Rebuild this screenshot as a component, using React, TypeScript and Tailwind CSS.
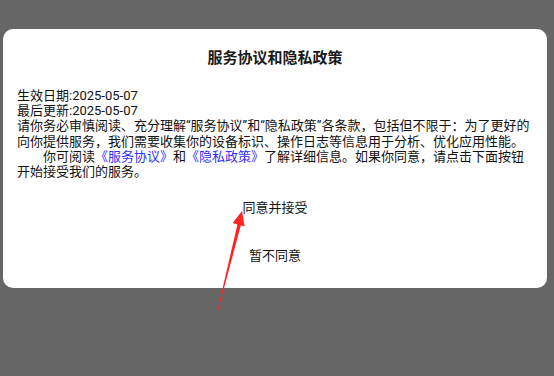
import React from 'react';

const font = { fontFamily: "Roboto, 'Noto Sans CJK SC', sans-serif" };

const Arrow: React.FC = () => (
  <svg
    className="absolute left-0 top-0 pointer-events-none"
    width={554}
    height={376}
    viewBox="0 0 554 376"
  >
    <polygon
      points="242,211 244.6,226.2 240.8,225.4 217.9,311 217.3,311 237.4,224.6 232.6,223"
      fill="#ff2424"
    />
  </svg>
);

const App: React.FC = () => {
  return (
    <div
      className="relative w-[554px] h-[376px] bg-[#666666] pt-[29px] pl-[3px] pr-[7px] overflow-hidden"
      style={font}
    >
      <div className="bg-white rounded-[10px] h-[259px] pt-[19px] flex flex-col">
        <h2 className="text-center text-[15px] leading-[20px] font-bold text-[#1a1a1a]">
          服务协议和隐私政策
        </h2>

        <div className="mt-[20px] px-[14px] text-[13px] leading-[15.2px] text-[#111]">
          <p>生效日期:2025-05-07</p>
          <p>最后更新:2025-05-07</p>
          <p>
            请你务必审慎阅读、充分理解“服务协议”和“隐私政策”各条款，包括但不限于：为了更好的向你提供服务，我们需要收集你的设备标识、操作日志等信息用于分析、优化应用性能。
          </p>
          <p className="indent-[26px]">
            你可阅读<span className="text-[#2f2fff]">《服务协议》</span>和<span className="text-[#2f2fff]">《隐私政策》</span>了解详细信息。如果你同意，请点击下面按钮开始接受我们的服务。
          </p>
        </div>

        <div className="flex flex-col items-center mt-[19px] text-[13px] leading-[20px] text-[#111]">
          <button className="px-2">同意并接受</button>
          <button className="px-2 mt-[28px]">暂不同意</button>
        </div>
      </div>
      <Arrow />
    </div>
  );
};

export default App;
